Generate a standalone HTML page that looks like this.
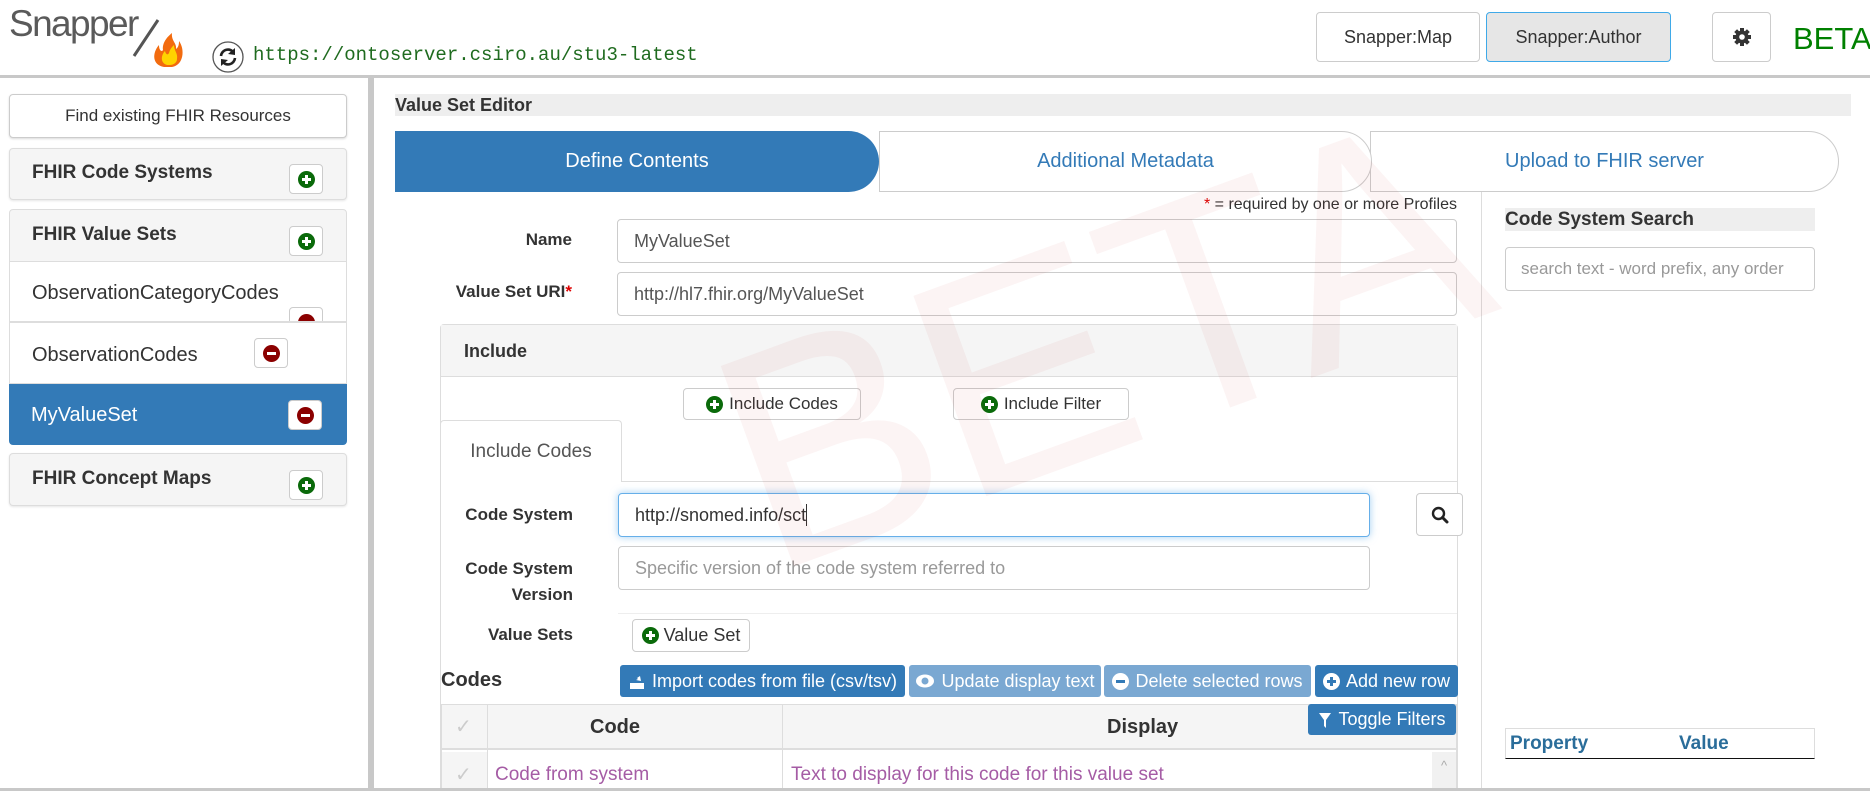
<!DOCTYPE html>
<html><head><meta charset="utf-8">
<style>
*{box-sizing:border-box;margin:0;padding:0}
body{width:1870px;height:791px;overflow:hidden;background:#fff;font-family:"Liberation Sans",Arial,sans-serif;color:#333;position:relative}
.a{position:absolute}
.btn{position:absolute;border:1px solid #ccc;border-radius:4px;background:#fff;display:flex;align-items:center;justify-content:center;font-size:18px;color:#333}
.inp{position:absolute;border:1px solid #ccc;border-radius:4px;background:#fff;font-size:18px;padding-left:16px;display:flex;align-items:center;color:#555}
.lbl{position:absolute;font-weight:bold;font-size:17px;text-align:right;color:#333}
.pc{display:inline-block;width:17px;height:17px;border-radius:50%;background:#0a6a0a;position:relative;vertical-align:middle}
.pc:before{content:"";position:absolute;left:4px;top:7px;width:9px;height:3px;background:#fff}
.pc.p:after{content:"";position:absolute;left:7px;top:4px;width:3px;height:9px;background:#fff}
.pc.r{background:#8b0000}
.pc.w{background:#fff}
.pc.w:before,.pc.w:after{background:#337ab7}
.pbtn{position:absolute;width:34px;height:30px;border:1px solid #ccc;border-radius:4px;background:#fff;display:flex;align-items:center;justify-content:center}
.bb{position:absolute;top:665px;height:32px;border-radius:3px;color:#fff;font-size:18px;display:flex;align-items:center;justify-content:center;gap:6px}
</style></head><body>
<!-- header -->
<div class="a" style="left:9px;top:3px;font-size:37px;color:#5a5a5a;letter-spacing:-1.6px">Snapper</div>
<svg class="a" style="left:126px;top:14px" width="70" height="56"><line x1="32" y1="6" x2="8" y2="42" stroke="#555" stroke-width="3"/>
<path d="M38 53 C26 51 26 39 33 31 C33 37 36 38 37 36 C36 29 41 23 46 19 C45 27 51 29 50 35 C53 33 53 29 53 27 C59 35 58 51 46 53 Z" fill="#f26b0f"/>
<path d="M41 51 C34 49 35 41 39 37 C40 41 42 41 43 39 C44 35 46 33 48 31 C48 37 52 39 51 45 C51 49 47 51 44 51 Z" fill="#ffd400"/></svg>
<svg class="a" style="left:212px;top:41px" width="32" height="32"><circle cx="16" cy="16" r="15" fill="#fff" stroke="#555" stroke-width="1.3"/>
<path d="M9 15 A7 7 0 0 1 22 12" fill="none" stroke="#222" stroke-width="2.6"/><path d="M23 7 L23 14 L16 13 Z" fill="#222"/>
<path d="M23 17 A7 7 0 0 1 10 20" fill="none" stroke="#222" stroke-width="2.6"/><path d="M9 25 L9 18 L16 19 Z" fill="#222"/></svg>
<div class="a" style="left:253px;top:44px;font-family:'Liberation Mono',monospace;font-size:19px;color:#1f6b1f">https://ontoserver.csiro.au/stu3-latest</div>
<div class="btn" style="left:1316px;top:12px;width:164px;height:50px">Snapper:Map</div>
<div class="btn" style="left:1486px;top:12px;width:185px;height:50px;background:#e6e6e6;border-color:#3fa9e8">Snapper:Author</div>
<div class="btn" style="left:1712px;top:12px;width:59px;height:50px">
<svg width="20" height="20" viewBox="0 0 20 20"><g fill="#333"><circle cx="10" cy="10" r="6.5"/><rect x="8" y="1" width="4" height="18"/><rect x="1" y="8" width="18" height="4"/><rect x="8" y="1" width="4" height="18" transform="rotate(45 10 10)"/><rect x="8" y="1" width="4" height="18" transform="rotate(-45 10 10)"/></g><circle cx="10" cy="10" r="2.8" fill="#fff"/></svg></div>
<div class="a" style="left:1793px;top:21px;font-size:31px;color:#008000">BETA</div>
<div class="a" style="left:0;top:75px;width:1870px;height:3px;background:#c8c8c8"></div>
<!-- sidebar -->
<div class="a" style="left:368px;top:78px;width:6px;height:713px;background:#c8c8c8"></div>
<div class="btn" style="left:9px;top:94px;width:338px;height:44px;font-size:17px;box-shadow:0 1px 2px rgba(0,0,0,.15)">Find existing FHIR Resources</div>
<div class="a" style="left:9px;top:148px;width:338px;height:52px;background:#f5f5f5;border:1px solid #ddd;border-radius:4px;box-shadow:0 1px 2px rgba(0,0,0,.1)"></div>
<div class="a" style="left:32px;top:162px;font-size:19px;font-weight:bold">FHIR Code Systems</div>
<div class="pbtn" style="left:289px;top:164px"><span class="pc p"></span></div>
<div class="a" style="left:9px;top:209px;width:338px;height:53px;background:#f5f5f5;border:1px solid #ddd;border-radius:4px 4px 0 0"></div>
<div class="a" style="left:32px;top:224px;font-size:19px;font-weight:bold">FHIR Value Sets</div>
<div class="pbtn" style="left:289px;top:226px"><span class="pc p"></span></div>
<div class="a" style="left:9px;top:262px;width:338px;height:60px;background:#fff;border:1px solid #ddd;border-top:none;overflow:hidden">
<div class="a" style="left:22px;top:20px;font-size:20px">ObservationCategoryCodes</div>
<div class="pbtn" style="left:279px;top:45px"><span class="pc r"></span></div></div>
<div class="a" style="left:9px;top:322px;width:338px;height:62px;background:#fff;border:1px solid #ddd;border-top:1px solid #ddd">
<div class="a" style="left:22px;top:21px;font-size:20px">ObservationCodes</div>
<div class="pbtn" style="left:244px;top:15px"><span class="pc r"></span></div></div>
<div class="a" style="left:9px;top:384px;width:338px;height:61px;background:#337ab7;border-radius:0 0 4px 4px">
<div class="a" style="left:22px;top:20px;font-size:20px;color:#fff">MyValueSet</div>
<div class="pbtn" style="left:279px;top:16px"><span class="pc r"></span></div></div>
<div class="a" style="left:9px;top:453px;width:338px;height:53px;background:#f5f5f5;border:1px solid #ddd;border-radius:4px;box-shadow:0 1px 2px rgba(0,0,0,.1)"></div>
<div class="a" style="left:32px;top:468px;font-size:19px;font-weight:bold">FHIR Concept Maps</div>
<div class="pbtn" style="left:289px;top:470px"><span class="pc p"></span></div>
<!-- main -->
<div class="a" style="left:395px;top:94px;width:1456px;height:22px;background:#eee"></div>
<div class="a" style="left:395px;top:95px;font-size:18px;font-weight:bold">Value Set Editor</div>
<div class="a" style="left:1370px;top:131px;width:469px;height:61px;border:1px solid #ccc;border-radius:0 32px 32px 0;display:flex;align-items:center;justify-content:center;color:#337ab7;font-size:20px">Upload to FHIR server</div>
<div class="a" style="left:879px;top:131px;width:493px;height:61px;background:#fff;border:1px solid #ccc;border-radius:0 32px 32px 0;display:flex;align-items:center;justify-content:center;color:#337ab7;font-size:20px">Additional Metadata</div>
<div class="a" style="left:395px;top:131px;width:484px;height:61px;background:#337ab7;border-radius:0 32px 32px 0;display:flex;align-items:center;justify-content:center;color:#fff;font-size:20px">Define Contents</div>
<div class="a" style="left:1481px;top:192px;width:1px;height:599px;background:#ddd"></div>
<div class="a" style="left:1100px;top:196px;width:357px;text-align:right;font-size:16px"><span style="color:#d00">*</span> = required by one or more Profiles</div>
<div class="lbl" style="left:400px;top:230px;width:172px">Name</div>
<div class="inp" style="left:617px;top:219px;width:840px;height:44px">MyValueSet</div>
<div class="lbl" style="left:400px;top:282px;width:172px">Value Set URI<span style="color:#d00">*</span></div>
<div class="inp" style="left:617px;top:272px;width:840px;height:44px">http://hl7.fhir.org/MyValueSet</div>
<div class="a" style="left:440px;top:324px;width:1018px;height:467px;border:1px solid #ddd;border-radius:4px 4px 0 0"></div>
<div class="a" style="left:441px;top:325px;width:1016px;height:52px;background:#f5f5f5;border-bottom:1px solid #ddd"></div>
<div class="a" style="left:464px;top:341px;font-size:18px;font-weight:bold">Include</div>
<div class="btn" style="left:683px;top:388px;width:178px;height:32px;font-size:17px;gap:6px"><span class="pc p"></span>Include Codes</div>
<div class="btn" style="left:953px;top:388px;width:176px;height:32px;font-size:17px;gap:6px"><span class="pc p"></span>Include Filter</div>
<div class="a" style="left:441px;top:481px;width:1016px;height:1px;background:#ddd"></div>
<div class="a" style="left:440px;top:420px;width:182px;height:62px;background:#fff;border:1px solid #ddd;border-bottom:none;border-radius:4px 4px 0 0;display:flex;align-items:center;justify-content:center;font-size:19px;color:#555">Include Codes</div>
<div class="lbl" style="left:400px;top:505px;width:173px">Code System</div>
<div class="inp" style="left:618px;top:493px;width:752px;height:44px;border-color:#66afe9;box-shadow:0 0 8px rgba(102,175,233,.6);color:#333">http://snomed.info/sct<span style="display:inline-block;width:1px;height:22px;background:#333"></span></div>
<div class="btn" style="left:1416px;top:493px;width:47px;height:43px"><svg width="18" height="18"><circle cx="7.5" cy="7.5" r="5.5" fill="none" stroke="#222" stroke-width="2.4"/><line x1="11.5" y1="11.5" x2="16" y2="16" stroke="#222" stroke-width="3" stroke-linecap="round"/></svg></div>
<div class="lbl" style="left:400px;top:556px;width:173px;line-height:26px">Code System<br>Version</div>
<div class="inp" style="left:618px;top:546px;width:752px;height:44px;color:#999">Specific version of the code system referred to</div>
<div class="a" style="left:618px;top:613px;width:839px;height:1px;background:#eee"></div>
<div class="lbl" style="left:400px;top:625px;width:173px">Value Sets</div>
<div class="btn" style="left:632px;top:619px;width:118px;height:33px;font-size:18px;gap:5px"><span class="pc p"></span>Value Set</div>
<div class="a" style="left:441px;top:669px;font-size:20px;font-weight:bold">Codes</div>
<div class="bb" style="left:620px;width:285px;background:#337ab7"><svg width="18" height="20"><path d="M4 2 L9 7 L12 5 L13 10 L8 9 L10 8 Z" fill="#fff"/><rect x="2" y="12" width="14" height="6" fill="#fff"/></svg>Import codes from file (csv/tsv)</div>
<div class="bb" style="left:909px;width:192px;background:#7aa8d2"><svg width="20" height="16"><ellipse cx="10" cy="8" rx="9" ry="6.5" fill="#fff"/><circle cx="10" cy="8" r="3.5" fill="#7aa8d2"/></svg>Update display text</div>
<div class="bb" style="left:1104px;width:207px;background:#7aa8d2"><span class="pc w" style="background:#fff"></span>Delete selected rows</div>
<div class="bb" style="left:1315px;width:143px;background:#337ab7"><span class="pc w p"></span>Add new row</div>
<div class="a" style="left:441px;top:704px;width:1016px;height:87px;border:1px solid #ddd"></div>
<div class="a" style="left:442px;top:705px;width:1014px;height:45px;background:#f5f5f5;border-bottom:2px solid #ddd"></div>
<div class="a" style="left:487px;top:705px;width:1px;height:86px;background:#ddd"></div>
<div class="a" style="left:782px;top:705px;width:1px;height:86px;background:#ddd"></div>
<div class="a" style="left:442px;top:752px;width:45px;height:39px;background:#f5f5f5"></div>
<div class="a" style="left:455px;top:714px;color:#ccc;font-size:20px">✓</div>
<div class="a" style="left:455px;top:762px;color:#ccc;font-size:20px">✓</div>
<div class="a" style="left:590px;top:716px;font-size:20px;font-weight:bold">Code</div>
<div class="a" style="left:1107px;top:716px;font-size:20px;font-weight:bold">Display</div>
<div class="bb" style="left:1308px;top:704px;width:148px;height:31px;background:#337ab7"><svg width="14" height="18"><path d="M1 2 H13 L8 9 V17 L6 15 V9 Z" fill="#fff"/></svg>Toggle Filters</div>
<div class="a" style="left:495px;top:764px;font-size:19px;color:#a55ca5">Code from system</div>
<div class="a" style="left:791px;top:764px;font-size:19px;color:#a55ca5">Text to display for this code for this value set</div>
<div class="a" style="left:1432px;top:752px;width:24px;height:39px;background:#f1f1f1;color:#aaa;font-size:13px;text-align:center;padding-top:6px">^</div>
<!-- right -->
<div class="a" style="left:1505px;top:208px;width:310px;height:23px;background:#eee;font-size:19px;font-weight:bold;padding-top:1px">Code System Search</div>
<div class="inp" style="left:1505px;top:247px;width:310px;height:44px;color:#999;font-size:17px;padding-left:15px">search text - word prefix, any order</div>
<div class="a" style="left:1505px;top:728px;width:310px;height:31px;border:1px solid #ddd;border-bottom:1px solid #111"></div>
<div class="a" style="left:1510px;top:733px;font-size:19px;font-weight:bold;color:#2a6d9a">Property</div>
<div class="a" style="left:1679px;top:733px;font-size:19px;font-weight:bold;color:#2a6d9a">Value</div>
<div class="a" style="left:0;top:788px;width:1870px;height:3px;background:#c8c8c8"></div>
<!-- watermark on top -->
<svg class="a" style="left:0;top:0;pointer-events:none" width="1870" height="791"><text x="770" y="575" font-family="Liberation Sans" font-size="310" textLength="780" lengthAdjust="spacingAndGlyphs" fill="rgba(190,40,40,0.05)" transform="rotate(-20 770 575)">BETA</text></svg>
</body></html>
